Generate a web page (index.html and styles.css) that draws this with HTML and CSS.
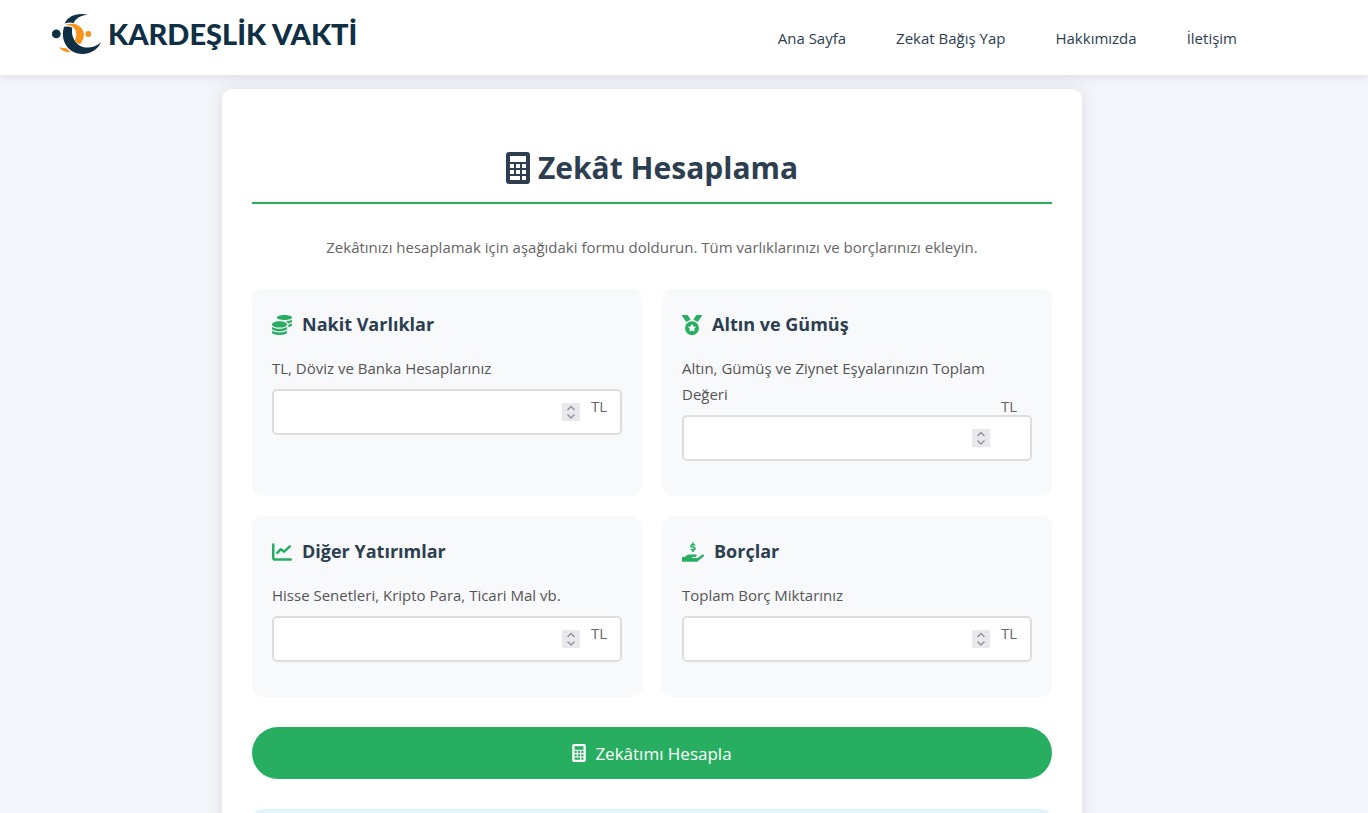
FILE: index.html
```html
<!DOCTYPE html>
<html lang="tr">
<head>
  <meta charset="UTF-8">
  <meta name="viewport" content="width=device-width, initial-scale=1.0">
  <title>Zekât Hesaplama</title>
  <link rel="stylesheet" href="styles.css">
</head>
<body>
  <header class="header">
    <a class="logo" href="#">
      <svg class="logo-mark" viewBox="0 0 50 42" aria-hidden="true">
        <g fill="#0f3044">
          <circle cx="4.3" cy="20.8" r="4.4"/>
          <path d="M36 1.6C25-.8 15.500 3 12.800 10.500Q17 8.700 21.800 9.900C23.500 6 28 2.500 36 1.600Z"/>
          <path d="M12 13.700C8.800 24 12.500 34 21 38.800C32 44 44 39.500 49.300 29.200C43 34.500 35 36 28.500 33C21.500 29 19 21.500 20.300 14.800Q16.500 12.800 12 13.700Z"/>
        </g>
        <g fill="#f7941d">
          <circle cx="36.300" cy="20.900" r="3"/>
          <path d="M12.800 12C21 9 28.500 11.500 31.200 18C33 23 31 28 28 31.300C25.500 30.300 24 29.300 22.700 27.500C25.500 23 24.500 17 20.800 13.800Q17 11.500 12.800 12Z"/>
          <path d="M7 34Q10.500 35.600 14.500 35.300Q16 37.500 18.600 39Q11 40 7 34Z"/>
        </g>
      </svg>
      <span class="logo-text">KARDEŞLİK VAKTİ</span>
    </a>
    <nav class="nav">
      <a href="#">Ana Sayfa</a>
      <a href="#">Zekat Bağış Yap</a>
      <a href="#">Hakkımızda</a>
      <a href="#">İletişim</a>
    </nav>
  </header>

  <main class="page">
    <div class="container">
      <h1>
        <svg class="icon-title" viewBox="0 0 24 32" aria-hidden="true"><path fill="currentColor" fill-rule="evenodd" d="M3 0H21Q24 0 24 3V29Q24 32 21 32H3Q0 32 0 29V3Q0 0 3 0ZM4 4V10H20V4ZM4 12V16H8V12ZM10 12V16H14V12ZM16 12V16H20V12ZM4 18V22H8V18ZM10 18V22H14V18ZM16 18V22H20V18ZM4 24V28H14V24ZM16 24V28H20V24Z"/></svg>
        Zekât Hesaplama
      </h1>
      <p class="intro">Zekâtınızı hesaplamak için aşağıdaki formu doldurun. Tüm varlıklarınızı ve borçlarınızı ekleyin.</p>

      <form>
        <div class="form-grid">
          <section class="card">
            <h3>
              <svg class="icon" viewBox="0 0 512 512" aria-hidden="true"><path d="M0 405.300V448c0 35.300 86 64 192 64s192-28.700 192-64v-42.700C342.700 434.400 267.200 448 192 448S41.300 434.400 0 405.300zM320 128c106 0 192-28.700 192-64S426 0 320 0 128 28.700 128 64s86 64 192 64zM0 300.400V352c0 35.300 86 64 192 64s192-28.700 192-64v-51.600c-41.300 34-116.900 51.600-192 51.600S41.300 334.400 0 300.400zm416 11c57.300-11.100 96-31.700 96-55.400v-42.700c-23.200 16.400-57.300 27.600-96 34.500v63.600zM192 160C86 160 0 195.800 0 240s86 80 192 80 192-35.800 192-80-86-80-192-80zm219.300 56.300c60-10.800 100.700-32 100.700-56.300v-42.700c-35.500 25.100-96.500 38.600-160.700 41.800 29.500 14.300 51.200 33.500 60 57.200z"/></svg>
              Nakit Varlıklar
            </h3>
            <div class="input-group">
              <label for="nakit">TL, Döviz ve Banka Hesaplarınız</label>
              <div class="field">
                <input type="number" id="nakit" min="0">
                <svg class="spinner" viewBox="0 0 18 18" aria-hidden="true"><path d="M5.500 7L9 3.500 12.500 7M5.500 11.500L9 15 12.500 11.500"/></svg>
              </div>
              <span class="currency">TL</span>
            </div>
          </section>

          <section class="card">
            <h3>
              <svg class="icon" viewBox="0 0 512 512" aria-hidden="true"><path d="M223.750 130.750L154.620 15.540A32 32 0 0 0 127.180 0H16.030C3.080 0-4.500 14.570 2.920 25.180l111.270 158.960c29.720-27.770 67.520-46.830 109.560-53.390zM495.970 0H384.820c-11.240 0-21.660 5.900-27.440 15.540l-69.130 115.210c42.040 6.560 79.840 25.620 109.560 53.380L509.080 25.180C516.500 14.570 508.920 0 495.970 0zM256 160c-97.200 0-176 78.800-176 176s78.800 176 176 176 176-78.800 176-176-78.800-176-176-176zm92.520 157.260l-37.930 36.960 8.970 52.220c1.600 9.360-8.260 16.510-16.650 12.090L256 393.880l-46.900 24.650c-8.400 4.450-18.250-2.740-16.650-12.090l8.970-52.220-37.930-36.960c-6.820-6.640-3.050-18.230 6.350-19.590l52.430-7.640 23.430-47.520c2.110-4.280 6.190-6.390 10.280-6.390 4.110 0 8.220 2.140 10.330 6.390l23.430 47.520 52.430 7.640c9.400 1.360 13.170 12.950 6.350 19.590z"/></svg>
              Altın ve Gümüş
            </h3>
            <div class="input-group">
              <label for="altin">Altın, Gümüş ve Ziynet Eşyalarınızın Toplam Değeri</label>
              <div class="field">
                <input type="number" id="altin" min="0">
                <svg class="spinner" viewBox="0 0 18 18" aria-hidden="true"><path d="M5.500 7L9 3.500 12.500 7M5.500 11.500L9 15 12.500 11.500"/></svg>
              </div>
              <span class="currency">TL</span>
            </div>
          </section>

          <section class="card">
            <h3>
              <svg class="icon icon-line" viewBox="0 0 512 512" aria-hidden="true"><path d="M32 64V400Q32 448 80 448H480M136 280L224 184L312 248L456 112"/></svg>
              Diğer Yatırımlar
            </h3>
            <div class="input-group">
              <label for="yatirim">Hisse Senetleri, Kripto Para, Ticari Mal vb.</label>
              <div class="field">
                <input type="number" id="yatirim" min="0">
                <svg class="spinner" viewBox="0 0 18 18" aria-hidden="true"><path d="M5.500 7L9 3.500 12.500 7M5.500 11.500L9 15 12.500 11.500"/></svg>
              </div>
              <span class="currency">TL</span>
            </div>
          </section>

          <section class="card">
            <h3>
              <svg class="icon icon-wide" viewBox="0 0 576 512" aria-hidden="true"><path d="M565.300 328.100c-11.800-10.700-30.200-10-42.600 0L430.300 402c-11.300 9.100-25.400 14-40 14H272c-8.800 0-16-7.200-16-16s7.200-16 16-16h78.300c15.900 0 30.700-10.900 33.300-26.600 3.300-20-12.100-37.400-31.600-37.400H192c-27 0-53.100 9.300-74.100 26.300L71.400 384H16c-8.800 0-16 7.200-16 16v96c0 8.800 7.200 16 16 16h356.800c14.500 0 28.600-4.900 40-14L564 377c15.200-12.100 16.400-35.300 1.300-48.900z"/><path class="dollar" d="M340 78C300 56 234 56 234 96C234 144 342 114 342 166C342 206 276 208 230 182M288 4V58M288 200V256"/></svg>
              Borçlar
            </h3>
            <div class="input-group">
              <label for="borc">Toplam Borç Miktarınız</label>
              <div class="field">
                <input type="number" id="borc" min="0">
                <svg class="spinner" viewBox="0 0 18 18" aria-hidden="true"><path d="M5.500 7L9 3.500 12.500 7M5.500 11.500L9 15 12.500 11.500"/></svg>
              </div>
              <span class="currency">TL</span>
            </div>
          </section>
        </div>

        <button type="button" class="btn">
          <svg class="icon-btn" viewBox="0 0 24 32" aria-hidden="true"><path fill="currentColor" fill-rule="evenodd" d="M3 0H21Q24 0 24 3V29Q24 32 21 32H3Q0 32 0 29V3Q0 0 3 0ZM4 4V10H20V4ZM4 12V16H8V12ZM10 12V16H14V12ZM16 12V16H20V12ZM4 18V22H8V18ZM10 18V22H14V18ZM16 18V22H20V18ZM4 24V28H14V24ZM16 24V28H20V24Z"/></svg>
          Zekâtımı Hesapla
        </button>
      </form>

      <div class="info-box"></div>
    </div>
  </main>
</body>
</html>
```
FILE: styles.css
```css
* {
  box-sizing: border-box;
}

body {
  margin: 0;
  background: #f4f6fb;
  color: #2c3e50;
  font-family: "Open Sans", "Noto Sans", sans-serif;
  font-size: 15px;
  line-height: 26px;
}

.header {
  position: relative;
  display: flex;
  align-items: center;
  justify-content: space-between;
  height: 75px;
  padding: 0 131px 0 52px;
  background: #fff;
  box-shadow: 0 2px 10px rgba(0, 0, 0, 0.1);
}

.logo {
  display: flex;
  align-items: center;
  gap: 6px;
  padding-bottom: 8px;
  color: #0f3044;
  text-decoration: none;
}

.logo-mark {
  width: 50px;
  height: 42px;
}

.logo-text {
  font-family: Lato, sans-serif;
  font-size: 29px;
  font-weight: 900;
  white-space: nowrap;
}

.nav {
  display: flex;
  gap: 50px;
}

.nav a {
  color: #2c3e50;
  text-decoration: none;
}

.page {
  padding: 14px 64px 30px 0;
}

.container {
  max-width: 860px;
  margin: 0 auto;
  padding: 52px 30px 30px;
  background: #fff;
  border-radius: 10px;
  box-shadow: 0 0 20px rgba(0, 0, 0, 0.1);
}

h1 {
  display: flex;
  align-items: center;
  justify-content: center;
  gap: 8px;
  margin: 0;
  padding: 3px 0 10px;
  border-bottom: 2px solid #27ae60;
  font-size: 30px;
  line-height: 48px;
}

.icon-title {
  width: 24px;
  height: 32px;
}

.intro {
  margin: 30px 0 29px;
  color: #666;
  text-align: center;
}

.form-grid {
  display: grid;
  grid-template-columns: 1fr 1fr;
  gap: 20px;
  margin-bottom: 30px;
}

.card {
  padding: 20px;
  background: #f8f9fb;
  border-radius: 10px;
}

h3 {
  display: flex;
  align-items: center;
  gap: 10px;
  margin: 0 0 15px;
  font-size: 18px;
  line-height: 31px;
}

.icon {
  width: 20px;
  height: 20px;
  fill: #27ae60;
}

.icon-wide {
  width: 22px;
}

.icon-line {
  fill: none;
  stroke: #27ae60;
  stroke-width: 64;
  stroke-linecap: round;
  stroke-linejoin: round;
}

.dollar {
  fill: none;
  stroke: #27ae60;
  stroke-width: 44;
}

.input-group {
  position: relative;
  margin-bottom: 15px;
}

label {
  display: block;
  margin-bottom: 8px;
  color: #555;
}

.field {
  position: relative;
}

input {
  display: block;
  width: 100%;
  height: 46px;
  padding: 12px 50px 12px 12px;
  border: 2px solid #ddd;
  border-radius: 5px;
  background: #fff;
  font: inherit;
  appearance: textfield;
}

.spinner {
  position: absolute;
  top: 14px;
  right: 42px;
  width: 18px;
  height: 18px;
  background: #e9e9ed;
  fill: none;
  stroke: #8f8f9d;
  stroke-width: 1.4;
}

.currency {
  position: absolute;
  top: 38px;
  right: 15px;
  color: #666;
}

.btn {
  display: flex;
  align-items: center;
  justify-content: center;
  gap: 9px;
  width: 100%;
  height: 52px;
  border: none;
  border-radius: 26px;
  background: #27ae60;
  color: #fff;
  font-family: "Open Sans", "Noto Sans", sans-serif;
  font-size: 17px;
}

.icon-btn {
  width: 14px;
  height: 18px;
}

.info-box {
  min-height: 80px;
  margin-top: 30px;
  background: #e1f5fe;
  border-radius: 10px;
}
```
